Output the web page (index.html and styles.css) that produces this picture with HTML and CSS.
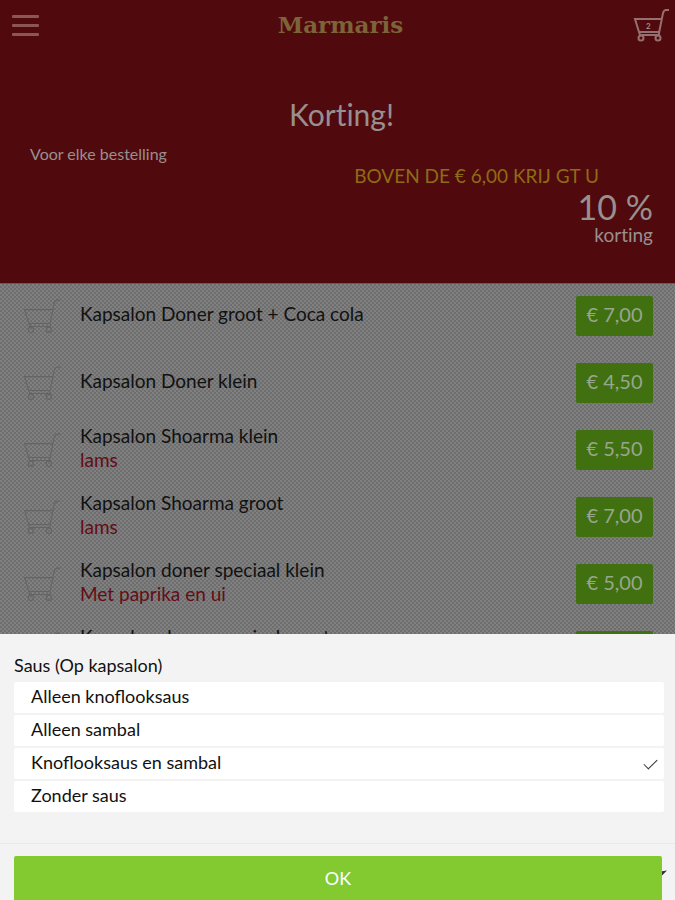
FILE: index.html
```html
<!DOCTYPE html>
<html lang="nl">
<head>
    <meta charset="UTF-8">
    <meta name="viewport" content="width=device-width, initial-scale=1.0">
    <title>Marmaris</title>
    <link rel="stylesheet" href="styles.css">
</head>
<body>
    <svg class="symbols" aria-hidden="true">
        <symbol id="cart" viewBox="0 0 37 34">
            <path d="M36 2h-3q-2 0-3 3l-4 20" />
            <path d="M29 11H2l4 13h20M6 24l1 3h19v-2" />
            <circle cx="8" cy="30" r="2.5" />
            <circle cx="25" cy="30" r="2.5" />
        </symbol>
    </svg>

    <div class="page">
        <header class="topbar">
            <button class="menu" aria-label="Menu"><span></span><span></span><span></span></button>
            <h1 class="logo">Marmaris</h1>
            <button class="basket" aria-label="Winkelwagen">
                <svg class="cart"><use href="#cart" /></svg>
                <span class="count">2</span>
            </button>
        </header>

        <section class="promo">
            <h2>Korting!</h2>
            <p class="every">Voor elke bestelling</p>
            <p class="above">BOVEN DE € 6,00 KRIJ GT U</p>
            <p class="percent">10 %</p>
            <p class="discount">korting</p>
        </section>

        <ul class="products">
            <li>
                <svg class="cart"><use href="#cart" /></svg>
                <div class="name">Kapsalon Doner groot + Coca cola</div>
                <button class="price">€ 7,00</button>
            </li>
            <li>
                <svg class="cart"><use href="#cart" /></svg>
                <div class="name">Kapsalon Doner klein</div>
                <button class="price">€ 4,50</button>
            </li>
            <li>
                <svg class="cart"><use href="#cart" /></svg>
                <div class="name">Kapsalon Shoarma klein<small>lams</small></div>
                <button class="price">€ 5,50</button>
            </li>
            <li>
                <svg class="cart"><use href="#cart" /></svg>
                <div class="name">Kapsalon Shoarma groot<small>lams</small></div>
                <button class="price">€ 7,00</button>
            </li>
            <li>
                <svg class="cart"><use href="#cart" /></svg>
                <div class="name">Kapsalon doner speciaal klein<small>Met paprika en ui</small></div>
                <button class="price">€ 5,00</button>
            </li>
            <li>
                <svg class="cart"><use href="#cart" /></svg>
                <div class="name">Kapsalon doner speciaal groot</div>
                <button class="price">€ 7,00</button>
            </li>
        </ul>
    </div>

    <form class="sheet">
        <div class="options" role="radiogroup" aria-labelledby="saus">
            <h3 id="saus">Saus (Op kapsalon)</h3>
            <label>Alleen knoflooksaus<input type="radio" name="saus"></label>
            <label>Alleen sambal<input type="radio" name="saus"></label>
            <label>Knoflooksaus en sambal<input type="radio" name="saus" checked></label>
            <label>Zonder saus<input type="radio" name="saus"></label>
        </div>
        <div class="actions">
            <button type="button" class="ok">OK</button>
            <svg class="more" viewBox="0 0 6 8" aria-hidden="true"><path d="M0 2l6-1-6 6z" /></svg>
        </div>
    </form>
</body>
</html>
```

FILE: styles.css
```css
* {
    box-sizing: border-box;
    margin: 0;
    padding: 0;
}

body {
    height: 100vh;
    overflow: hidden;
    background-color: #777;
    font-family: Lato, sans-serif;
    font-size: 19px;
    line-height: 24px;
    color: #111;
}

button {
    border: none;
    background: none;
    font: inherit;
    color: inherit;
    cursor: pointer;
}

.symbols {
    display: none;
}

.page {
    background-color: #777;
    background-image: repeating-conic-gradient(#6e6e6e 0 25%, #808080 0 50%);
    background-size: 4px 4px;
}

.topbar {
    display: flex;
    align-items: center;
    justify-content: space-between;
    height: 50px;
    padding: 0 5px 0 12px;
    background-color: #500a0d;
}

.menu {
    display: flex;
    flex-direction: column;
    gap: 6px;
    width: 36px;
}

.menu span {
    width: 27px;
    height: 3px;
    border-radius: 1px;
    background-color: #8c5654;
}

.logo {
    font-family: "DejaVu Serif", serif;
    font-size: 23px;
    font-weight: bold;
    color: #7c6438;
}

.cart {
    display: block;
    width: 40px;
    height: 36px;
    fill: none;
    stroke: #646464;
    stroke-width: 1;
}

.basket {
    position: relative;
}

.basket .cart {
    width: 37px;
    height: 34px;
    stroke: #96706e;
    stroke-width: 2;
}

.count {
    position: absolute;
    top: 12px;
    left: 13px;
    font-size: 8px;
    font-weight: bold;
    line-height: 12px;
    color: #a6908e;
}

.promo {
    height: 234px;
    padding: 44px 22px 0 30px;
    border-bottom: 1px solid #7a5254;
    background-color: #500a0d;
    color: #989090;
    text-align: right;
    font-variant-ligatures: none;
}

.promo h2 {
    font-size: 30px;
    font-weight: normal;
    line-height: 40px;
    text-align: center;
}

.every {
    margin-top: 8px;
    font-size: 16px;
    text-align: left;
}

.above {
    padding-right: 54px;
    line-height: 20px;
    color: #8d6c16;
}

.percent {
    margin-top: 2px;
    font-size: 34px;
    line-height: 38px;
}

.discount {
    line-height: 18px;
}

.products {
    list-style: none;
}

.products li {
    display: flex;
    align-items: center;
    height: 67px;
    padding: 0 22px 3px;
}

.products li:last-child {
    align-items: flex-start;
    padding-top: 12px;
}

.products li:last-child .name {
    margin-top: -6px;
}

.name {
    flex: 1;
    padding: 0 0 4px 18px;
}

.name small {
    display: block;
    font-size: 19px;
    color: #650c16;
}

.price {
    width: 77px;
    height: 40px;
    padding-bottom: 5px;
    border-radius: 2px;
    background-color: #407010;
    font-size: 20px;
    color: #99a68e;
}

.sheet {
    position: fixed;
    right: 0;
    bottom: 0;
    left: 0;
    background-color: #f3f3f3;
    font-size: 18px;
}

.options {
    display: flex;
    flex-direction: column;
    gap: 2px;
    padding: 19px 11px 31px 14px;
}

.options h3 {
    margin-bottom: 3px;
    font-size: 18px;
    font-weight: normal;
}

.options label {
    display: flex;
    align-items: center;
    justify-content: space-between;
    height: 31px;
    padding: 0 8px 4px 17px;
    border-radius: 2px;
    background-color: #fff;
}

.options input {
    appearance: none;
    width: 12px;
    height: 12px;
}

/* tick drawn from two sides of a rotated box */
.options input:checked::before {
    content: "";
    display: block;
    width: 12px;
    height: 6px;
    margin-top: 3px;
    border: solid #333;
    border-width: 0 0 1px 1px;
    transform: rotate(-45deg);
}

.actions {
    display: flex;
    padding: 12px 8px 0 14px;
    border-top: 1px solid #eaeaea;
}

.ok {
    flex: 1;
    height: 44px;
    border-radius: 2px 2px 0 0;
    background-color: #82ca2f;
    font-size: 18px;
    color: #fff;
}

.more {
    width: 5px;
    height: 8px;
    margin-top: 13px;
    fill: #333;
}
```
